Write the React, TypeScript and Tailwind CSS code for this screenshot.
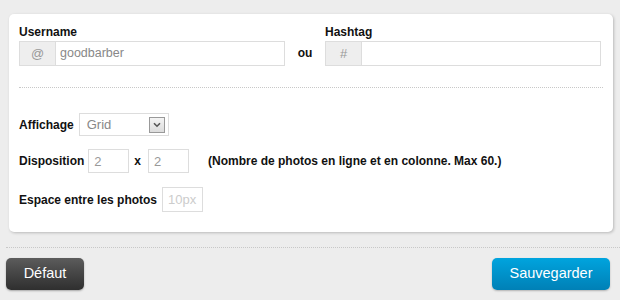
import React from 'react';

const labelCls = 'text-[12px] font-bold text-[#111] leading-[14px]';
const smallInput =
  'h-[24px] w-[41px] border border-[#ddd] bg-white px-[5px] text-[13px] leading-[22px] text-[#999] outline-none';

const AddonInput: React.FC<{ addon: string; value?: string }> = ({ addon, value }) => (
  <div className="flex h-[25px] border border-[#ddd]">
    <div className="flex w-[36px] items-center justify-center border-r border-[#ddd] bg-[#eee] text-[13px] text-[#999]">
      {addon}
    </div>
    <div className="flex flex-1 items-center bg-white px-[4px] text-[12.5px] text-[#888]">{value}</div>
  </div>
);

const App: React.FC = () => {
  return (
    <div className="h-[300px] w-[620px] overflow-hidden bg-[#ededed] font-['Liberation_Sans',Arial,sans-serif]">
      <div className="pl-[9px] pr-[7px] pt-[14px]">
        {/* Card */}
        <div className="rounded-[5px] bg-white pl-[10px] pr-[10px] pt-[11px] pb-[20px] shadow-[1px_1px_3px_rgba(0,0,0,0.22)]">
          <div className="flex pr-[2px]">
            <div className="w-[266px]">
              <div className={`${labelCls} mb-[2px]`}>Username</div>
              <AddonInput addon="@" value="goodbarber" />
            </div>
            <div className="flex w-[40px] items-end justify-center pb-[4px] text-[12px] font-bold text-[#111]">ou</div>
            <div className="flex-1">
              <div className={`${labelCls} mb-[2px]`}>Hashtag</div>
              <AddonInput addon="#" />
            </div>
          </div>

          <div className="mt-[21px] border-t border-dotted border-[#c8c8c8]" />

          {/* Affichage */}
          <div className="mt-[25px] flex items-center">
            <span className={labelCls}>Affichage</span>
            <div className="ml-[5px] flex h-[23px] w-[90px] items-center justify-between border border-[#ddd] bg-white pl-[7px] pr-[3px]">
              <span className="text-[13px] text-[#888]">Grid</span>
              <div className="flex h-[16px] w-[16px] items-center justify-center border border-[#999] bg-gradient-to-b from-[#f4f4f4] to-[#dcdcdc]">
                <svg width="8" height="6" viewBox="0 0 8 6">
                  <path d="M1 1.2 L4 4.2 L7 1.2" fill="none" stroke="#555" strokeWidth="1.6" />
                </svg>
              </div>
            </div>
          </div>

          {/* Disposition */}
          <div className="mt-[13px] flex items-center">
            <span className={labelCls}>Disposition</span>
            <input readOnly value="2" className={`${smallInput} ml-[4px]`} />
            <span className="ml-[5px] mr-[7px] text-[12px] font-bold text-[#111]">x</span>
            <input readOnly value="2" className={smallInput} />
            <span className="ml-[19px] text-[12px] font-bold text-[#111]">
              (Nombre de photos en ligne et en colonne. Max 60.)
            </span>
          </div>

          {/* Espace */}
          <div className="mt-[14px] flex items-center">
            <span className={labelCls}>Espace entre les photos</span>
            <input
              readOnly
              placeholder="10px"
              className={`${smallInput} ml-[5px] h-[25px] text-[12px] placeholder:text-[#ccc]`}
            />
          </div>
        </div>
      </div>

      {/* Footer */}
      <div className="ml-[6px] mt-[15px] border-t border-dotted border-[#c8c8c8]" />
      <div className="flex justify-between pl-[6px] pr-[10px] pt-[10px]">
        <button className="h-[32px] w-[78px] rounded-[5px] bg-gradient-to-b from-[#5c5c5c] to-[#2f2f2f] text-[14.5px] text-white shadow-[0_1px_2px_rgba(0,0,0,0.3)]">
          Défaut
        </button>
        <button className="h-[32px] w-[118px] rounded-[5px] bg-gradient-to-b from-[#00a4de] to-[#0080b6] text-[14.5px] text-white shadow-[0_1px_2px_rgba(0,0,0,0.25)]">
          Sauvegarder
        </button>
      </div>
    </div>
  );
};

export default App;
